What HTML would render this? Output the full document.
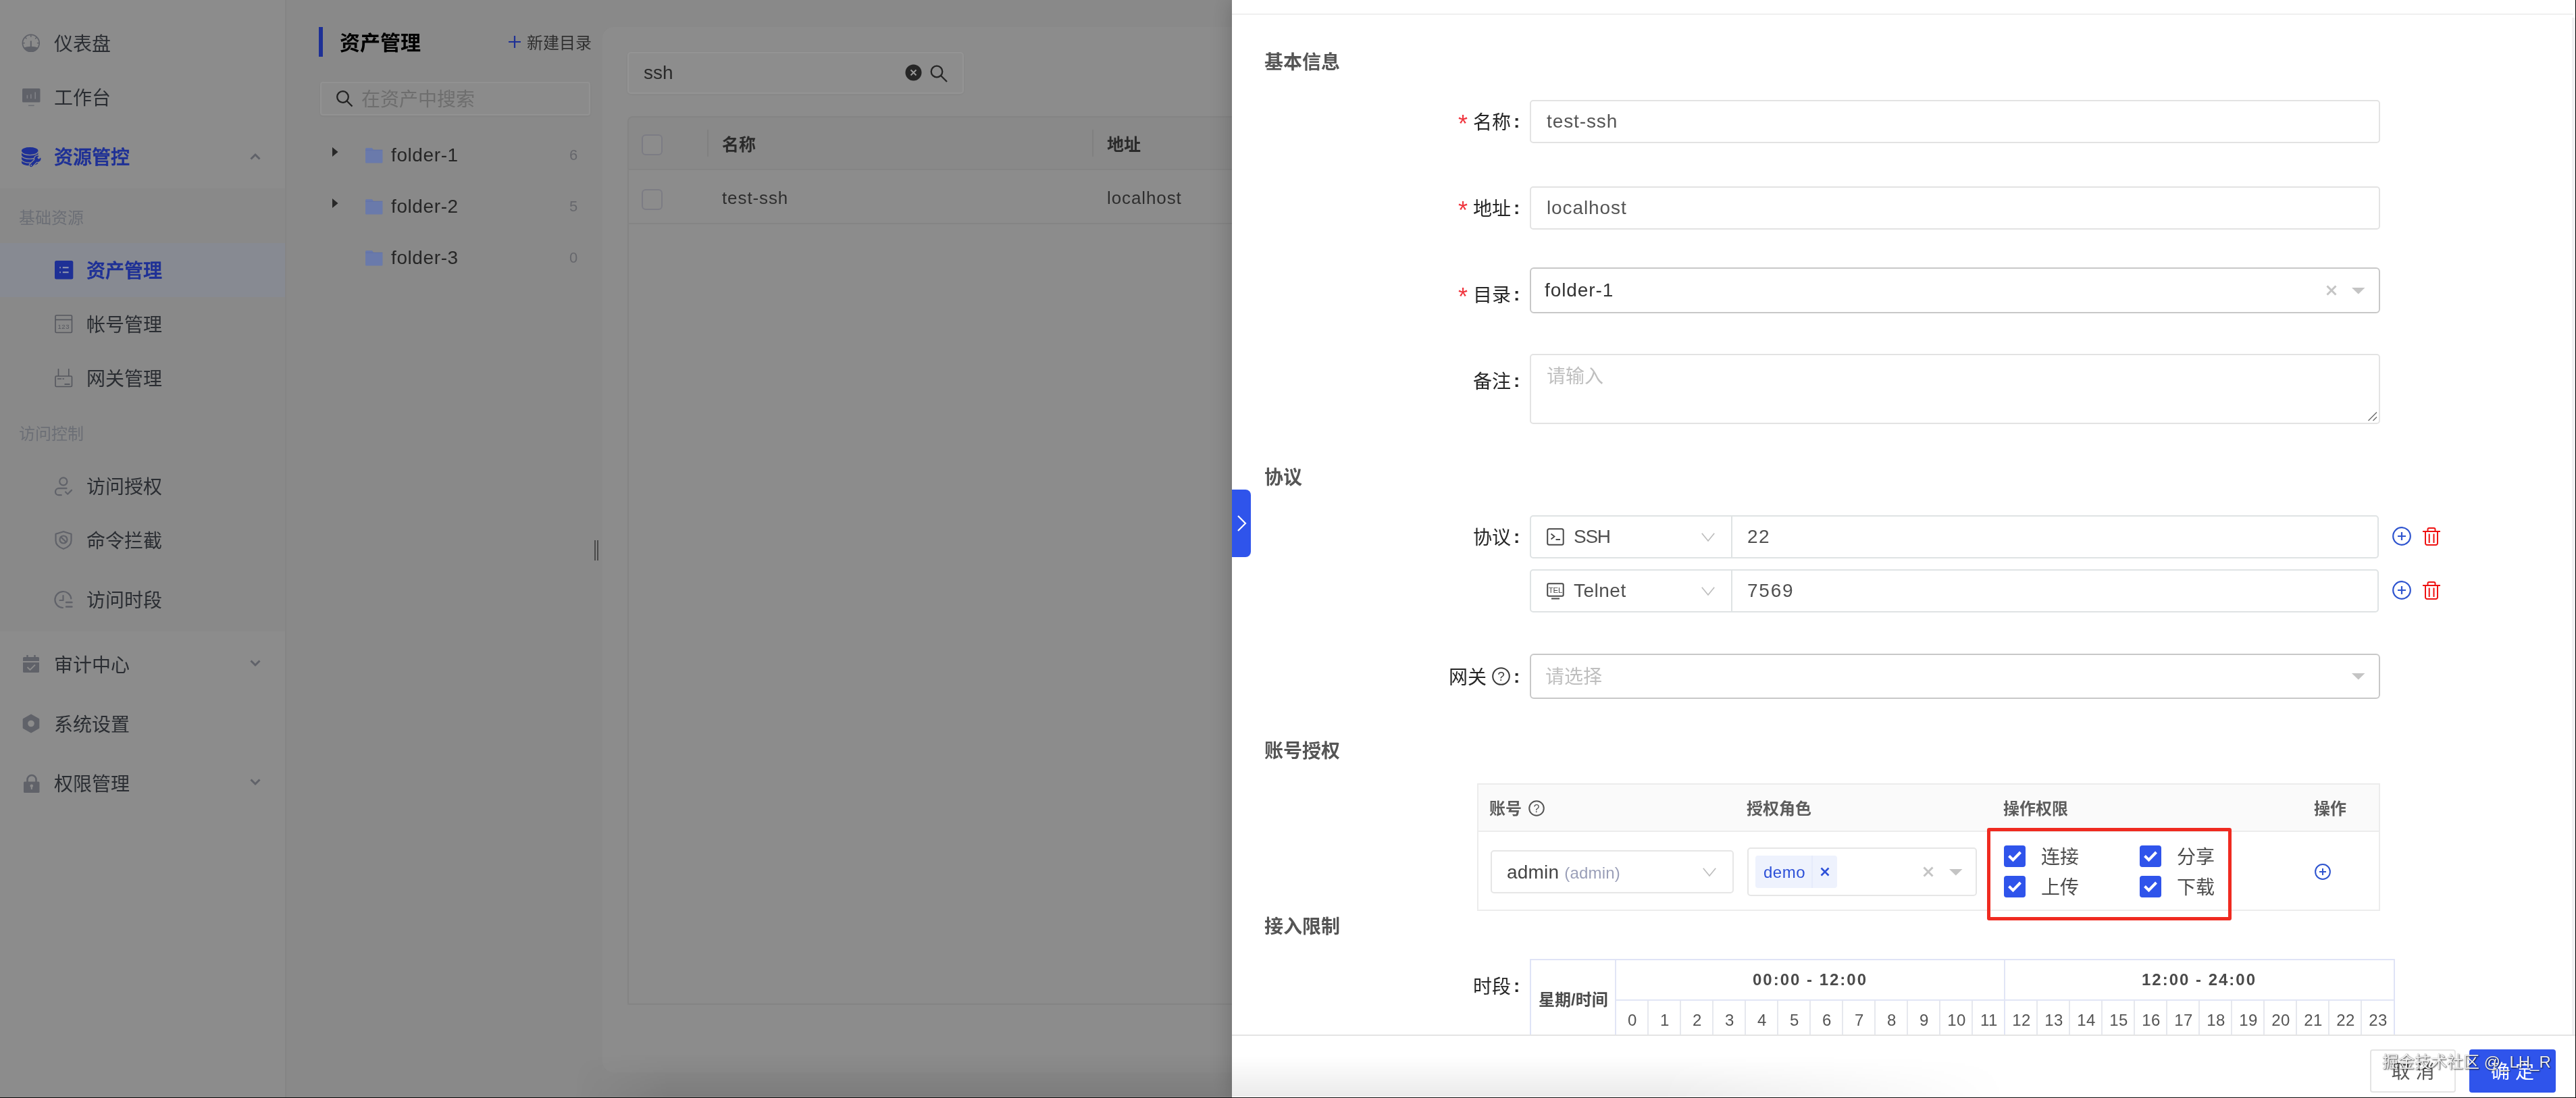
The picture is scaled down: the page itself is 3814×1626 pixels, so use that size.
<!DOCTYPE html>
<html lang="zh-CN">
<head>
<meta charset="utf-8">
<title>资产管理</title>
<style>
*{box-sizing:border-box;margin:0;padding:0}
html,body{width:3814px;height:1626px;overflow:hidden}
body{position:relative;background:#898989;font-family:"Liberation Sans","Noto Sans CJK SC",sans-serif;font-size:28px;color:#333}
.abs{position:absolute}
.t{position:absolute;white-space:nowrap;line-height:40px;height:40px}
svg{position:absolute;display:block;overflow:visible}
/* ---------- left (masked) ---------- */
#side{position:absolute;left:0;top:0;width:424px;height:1626px;background:#8c8c8c;border-right:2px solid #858585}
#sub{position:absolute;left:0;top:279px;width:422px;height:656px;background:#898989}
#sel{position:absolute;left:0;top:360px;width:422px;height:80px;background:#878a92}
.m{color:#2a2d32;font-size:28px}
.g{color:#6c6f76;font-size:24px}
.b{color:#1e3096;font-weight:500;-webkit-text-stroke:.6px #1e3096}
#tree{position:absolute;left:424px;top:0;width:468px;height:1626px;background:#898989}
#card{position:absolute;left:892px;top:40px;width:1000px;height:1548px;background:#8c8c8c;border-radius:16px 0 0 16px}
.la{font-size:28px;letter-spacing:.6px;color:#262626}
.ct{font-size:22px;color:#66676c}
.lt{font-size:26px;letter-spacing:.9px;color:#2e2e2e}
.cb{width:31px;height:31px;border:2.500px solid #7c7c84;border-radius:6px;background:#8c8c8c}
/* ---------- drawer ---------- */
#drawer{position:absolute;left:1824px;top:0;width:1990px;height:1626px;background:#fff;box-shadow:0 0 30px 0 rgba(0,0,0,.22)}

.lb{color:#262626;font-size:28px}
.cl{font-weight:bold;font-family:"Liberation Sans",sans-serif}
.ast{position:absolute;color:#f0353e;font-size:36px;line-height:40px;height:40px;font-family:"Liberation Sans",sans-serif}
.sec{color:#555;font-size:28px;font-weight:bold}
.inp{position:absolute;border:2px solid #e3e3e3;border-radius:5px;background:#fff}
.sl{position:absolute;border:2px solid #c8c8c8;border-radius:6px;background:#fff}
.v{color:#555;font-size:28px;letter-spacing:.9px}
.ph{color:#bfbfbf;font-size:28px}
.th{color:#5c5c5c;font-size:24px;font-weight:bold}
.ck{position:absolute;width:32px;height:32px;border-radius:4px;background:#2f54eb}
.ck svg{left:6px;top:8px}
.tc{position:absolute;top:1482px;width:50px;height:52px;border-left:2px solid #e6e8ee;color:#555;font-size:24px;line-height:58px;text-align:center;letter-spacing:.5px}
</style>
</head>
<body>
<div id="root" style="position:absolute;left:0;top:0;width:3814px;height:1626px;will-change:transform;opacity:.9999">
<!-- LEFT -->
<div id="side">
  <div id="sub"></div>
  <div id="sel"></div>

  <!-- main items -->
  <svg style="left:32px;top:50px" width="28" height="28" viewBox="0 0 28 28"><circle cx="13.800" cy="13.800" r="12.400" fill="none" stroke="#606269" stroke-width="1.700"/><path d="M2.550 20.800Q13.800 16.600 25.050 20.800A13.250 13.250 0 0 1 2.550 20.800Z" fill="#606269"/><path d="M13.800 10.500v9" stroke="#606269" stroke-width="2" fill="none"/><path d="M13.800 1.500v3.400M1.500 13.800h3.200M26.100 13.800h-3.200M5.100 5.100l2.300 2.300M22.500 5.100l-2.300 2.300" stroke="#606269" stroke-width="1.400" fill="none"/></svg>
  <div class="t m" style="left:80px;top:46px">仪表盘</div>
  <svg style="left:33px;top:131px" width="27" height="27" viewBox="0 0 27 27"><rect x="0" y="0" width="26.5" height="20.5" rx="1.5" fill="#606269"/><path d="M7.400 14.800v-5M12.800 15v-6.500M19.200 15.600v-10" stroke="#808187" stroke-width="1.600" fill="none"/><path d="M9 25.300h8.600" stroke="#6c6e74" stroke-width="1.600" fill="none"/></svg>
  <div class="t m" style="left:80px;top:126px">工作台</div>
  <svg style="left:31.700px;top:217.600px" width="29" height="29" viewBox="0 0 29 29"><path d="M0 5V22.500A12.200 5 0 0 0 24.400 22.500V5A12.200 5 0 0 0 0 5Z" fill="#1e3096"/><path d="M0 6.600A12.200 5 0 0 0 24.400 6.600M0 12.400A12.200 5 0 0 0 24.400 12.400M0 18.200A12.200 5 0 0 0 24.400 18.200" fill="none" stroke="#8c8c8c" stroke-width="1.300"/><g transform="translate(23.800 17.200) rotate(45)"><circle r="4.700" fill="#1e3096" stroke="#8c8c8c" stroke-width="2.400"/><rect x="-2.200" y="2.500" width="4.400" height="13.500" rx="2.200" fill="#1e3096" stroke="#8c8c8c" stroke-width="2.400"/><circle r="4.700" fill="#1e3096"/><rect x="-2.200" y="2.500" width="4.400" height="13.500" rx="2.200" fill="#1e3096"/><rect x="-1.700" y="-6" width="3.400" height="5.200" fill="#8c8c8c"/><circle cy="13.600" r="1" fill="#8c8c8c"/></g></svg>
  <div class="t m b" style="left:80px;top:214px">资源管控</div>
  <svg style="left:370px;top:227px" width="16" height="10" viewBox="0 0 16 10"><path d="M1.500 8.500L8 2l6.500 6.500" stroke="#606269" stroke-width="3" fill="none"/></svg>

  <div class="t g" style="left:28px;top:303px">基础资源</div>
  <svg style="left:81px;top:386px" width="28" height="28" viewBox="0 0 28 28"><rect x="0" y="0" width="27.300" height="27.500" rx="2.500" fill="#1e3096"/><path d="M11.800 10.300h8.800M11.800 17.200h8.800" stroke="#959ab0" stroke-width="1.900" fill="none"/><path d="M7.200 10.300h1.700M7.200 17.200h1.700" stroke="#959ab0" stroke-width="1.900" fill="none"/></svg>
  <div class="t m b" style="left:128px;top:382px">资产管理</div>
  <svg style="left:81px;top:466px" width="27" height="28" viewBox="0 0 27 28"><rect x="1" y="1" width="24.500" height="25.500" rx="1.500" fill="none" stroke="#55575e" stroke-width="1.600"/><path d="M1 7.500h24.500" stroke="#55575e" stroke-width="1.600"/><text x="13.300" y="21" font-size="9.500" font-family="Liberation Sans,sans-serif" fill="#55575e" text-anchor="middle" letter-spacing=".6">123</text></svg>
  <div class="t m" style="left:128px;top:462px">帐号管理</div>
  <svg style="left:81px;top:546px" width="27" height="28" viewBox="0 0 27 28"><rect x="1" y="11" width="24.500" height="15.500" rx="1.500" fill="none" stroke="#55575e" stroke-width="1.600"/><path d="M5.500 0v11M20.800 0v11" stroke="#55575e" stroke-width="1.600"/><path d="M4 15h6M11.500 15h2.500" stroke="#55575e" stroke-width="1.600"/><path d="M14.500 23h8" stroke="#55575e" stroke-width="1.800"/></svg>
  <div class="t m" style="left:128px;top:542px">网关管理</div>

  <div class="t g" style="left:28px;top:623px">访问控制</div>
  <svg style="left:80px;top:706px" width="28" height="28" viewBox="0 0 28 28"><circle cx="13.800" cy="7" r="5.600" fill="none" stroke="#606269" stroke-width="2.200"/><path d="M18.500 17.200H7a5 5 0 0 0 0 10h3.800" fill="none" stroke="#606269" stroke-width="2.200" stroke-linecap="round"/><path d="M17 22.500l3.200 3.200 5.800-5.800" fill="none" stroke="#606269" stroke-width="2.200" stroke-linecap="round" stroke-linejoin="round"/></svg>
  <div class="t m" style="left:128px;top:702px">访问授权</div>
  <svg style="left:81px;top:786px" width="26" height="28" viewBox="0 0 26 28"><path d="M13 1.200L24.500 4.800v9.700c0 6-4.500 10-11.500 12.300C6 24.500 1.500 20.500 1.500 14.500V4.800z" fill="none" stroke="#606269" stroke-width="2.200" stroke-linejoin="round"/><circle cx="13" cy="13" r="5.500" fill="none" stroke="#606269" stroke-width="2.200"/><path d="M9.200 9.200l7.600 7.600" stroke="#606269" stroke-width="2.200"/></svg>
  <div class="t m" style="left:128px;top:782px">命令拦截</div>
  <svg style="left:80px;top:875px" width="28" height="27" viewBox="0 0 28 27"><path d="M25.300 11.500A12 12 0 1 0 13 25" fill="none" stroke="#606269" stroke-width="2.200" stroke-linecap="round"/><path d="M13.500 7v7H8.500" fill="none" stroke="#606269" stroke-width="2.200" stroke-linecap="round" stroke-linejoin="round"/><path d="M18 17h8.500M18 23.500h8.500" stroke="#606269" stroke-width="2.400" stroke-linecap="round"/></svg>
  <div class="t m" style="left:128px;top:870px">访问时段</div>

  <svg style="left:34px;top:970px" width="24" height="27" viewBox="0 0 24 27"><path d="M0 4.500a1.500 1.500 0 0 1 1.500-1.500H22.500a1.500 1.500 0 0 1 1.500 1.500V9H0zM0 11h24v13.500a1.500 1.500 0 0 1-1.500 1.500H1.500A1.500 1.500 0 0 1 0 24.500z" fill="#606269"/><path d="M6.500 0v5M17.500 0v5" stroke="#606269" stroke-width="2.400"/><path d="M6.500 18l4 4 7.500-7.500" stroke="#8c8c8c" stroke-width="1.800" fill="none"/></svg>
  <div class="t m" style="left:80px;top:966px">审计中心</div>
  <svg style="left:370px;top:977px" width="16" height="10" viewBox="0 0 16 10"><path d="M1.500 1.500L8 8l6.500-6.500" stroke="#606269" stroke-width="3" fill="none"/></svg>
  <svg style="left:33px;top:1057px" width="26" height="29" viewBox="0 0 26 29"><path d="M13 .5l11.500 6.500a1.500 1.500 0 0 1 .8 1.300v12.400a1.500 1.500 0 0 1-.8 1.300L13 28.500 1.500 22a1.500 1.500 0 0 1-.8-1.300V8.300A1.500 1.500 0 0 1 1.500 7z" fill="#606269"/><circle cx="13" cy="14.500" r="4.800" fill="#8c8c8c"/></svg>
  <div class="t m" style="left:80px;top:1054px">系统设置</div>
  <svg style="left:35px;top:1147px" width="24" height="27" viewBox="0 0 24 27"><path d="M5.500 11V7.500a6.500 6.500 0 0 1 13 0V11" fill="none" stroke="#606269" stroke-width="2.600"/><rect x="0" y="10.500" width="23.500" height="16.500" rx="1.500" fill="#606269"/><circle cx="11.800" cy="16.800" r="2.300" fill="#8c8c8c"/><path d="M11.800 17v5" stroke="#8c8c8c" stroke-width="2"/></svg>
  <div class="t m" style="left:80px;top:1142px">权限管理</div>
  <svg style="left:370px;top:1153px" width="16" height="10" viewBox="0 0 16 10"><path d="M1.500 1.500L8 8l6.500-6.500" stroke="#606269" stroke-width="3" fill="none"/></svg>
</div>
<div id="tree">
  <div class="abs" style="left:48px;top:40px;width:6px;height:44px;background:#1e3096"></div>
  <div class="t" style="left:79px;top:44px;font-size:30px;font-weight:bold;color:#000">资产管理</div>
  <svg style="left:329px;top:53px" width="18" height="18" viewBox="0 0 18 18"><path d="M9 0v18M0 9h18" stroke="#1e3096" stroke-width="2.200"/></svg>
  <div class="t" style="left:356px;top:44px;font-size:24px;color:#303030">新建目录</div>
  <div class="abs" style="left:50px;top:121px;width:400px;height:50px;background:#8b8b8b;border:2px solid #929292;border-radius:4px;box-shadow:0 1px 3px rgba(0,0,0,.06)"></div>
  <svg style="left:73px;top:133px" width="26" height="26" viewBox="0 0 26 26"><circle cx="10.500" cy="10.500" r="8.300" fill="none" stroke="#222" stroke-width="2.300"/><path d="M16.500 16.500L24.500 24.500" stroke="#222" stroke-width="2.300"/></svg>
  <div class="t" style="left:111px;top:128px;font-size:28px;color:#6e6e6e">在资产中搜索</div>

  <svg style="left:68px;top:218px" width="9" height="14" viewBox="0 0 9 14"><path d="M0 0l8.500 7L0 14z" fill="#282828"/></svg>
  <svg style="left:117px;top:219px" width="26" height="23" viewBox="0 0 26 23"><path d="M0 1.500A1.500 1.500 0 0 1 1.500 0H10l2 3h12a1.500 1.500 0 0 1 1.500 1.500V21a1.500 1.500 0 0 1-1.500 1.500H1.500A1.500 1.500 0 0 1 0 21z" fill="#6a7aab"/><path d="M0 3.200h25.500" stroke="#6072a8" stroke-width="1"/></svg>
  <div class="t la" style="left:155px;top:210px">folder-1</div>
  <div class="t ct" style="left:419px;top:210px">6</div>
  <svg style="left:68px;top:294px" width="9" height="14" viewBox="0 0 9 14"><path d="M0 0l8.500 7L0 14z" fill="#282828"/></svg>
  <svg style="left:117px;top:295px" width="26" height="23" viewBox="0 0 26 23"><path d="M0 1.500A1.500 1.500 0 0 1 1.500 0H10l2 3h12a1.500 1.500 0 0 1 1.500 1.500V21a1.500 1.500 0 0 1-1.500 1.500H1.500A1.500 1.500 0 0 1 0 21z" fill="#6a7aab"/><path d="M0 3.200h25.500" stroke="#6072a8" stroke-width="1"/></svg>
  <div class="t la" style="left:155px;top:286px">folder-2</div>
  <div class="t ct" style="left:419px;top:286px">5</div>
  <svg style="left:117px;top:371px" width="26" height="23" viewBox="0 0 26 23"><path d="M0 1.500A1.500 1.500 0 0 1 1.500 0H10l2 3h12a1.500 1.500 0 0 1 1.500 1.500V21a1.500 1.500 0 0 1-1.500 1.500H1.500A1.500 1.500 0 0 1 0 21z" fill="#6a7aab"/><path d="M0 3.200h25.500" stroke="#6072a8" stroke-width="1"/></svg>
  <div class="t la" style="left:155px;top:362px">folder-3</div>
  <div class="t ct" style="left:419px;top:362px">0</div>
  <div class="abs" style="left:456px;top:800px;width:2px;height:30px;background:#4a4a4a"></div>
  <div class="abs" style="left:460px;top:800px;width:2px;height:30px;background:#4a4a4a"></div>
</div>
<div id="card">
  <div class="abs" style="left:37px;top:37px;width:498px;height:62px;background:#8d8d8d;border:2px solid #949494;border-radius:5px;box-shadow:0 1px 3px rgba(0,0,0,.06)"></div>
  <div class="t" style="left:61px;top:48px;font-size:28px;color:#2a2a2a">ssh</div>
  <svg style="left:448px;top:55px" width="25" height="25" viewBox="0 0 25 25"><circle cx="12.500" cy="12.500" r="12" fill="#262626"/><path d="M8.500 8.500l8 8M16.500 8.500l-8 8" stroke="#9a9a9a" stroke-width="2"/></svg>
  <svg style="left:485px;top:56px" width="26" height="26" viewBox="0 0 26 26"><circle cx="10" cy="10" r="8.300" fill="none" stroke="#262626" stroke-width="2.300"/><path d="M16 16L25 25" stroke="#262626" stroke-width="2.300"/></svg>
  <div class="abs" style="left:37px;top:132px;width:1000px;height:1316px;border:2px solid #848484;border-right:0;border-radius:8px 0 0 0"></div>
  <div class="abs" style="left:39px;top:134px;width:1000px;height:76px;background:#898989;border-radius:6px 0 0 0"></div>
  <div class="abs" style="left:39px;top:210px;width:1000px;height:2px;background:#848484"></div>
  <div class="abs" style="left:39px;top:290px;width:1000px;height:2px;background:#848484"></div>
  <div class="abs cb" style="left:58px;top:159px"></div>
  <div class="abs cb" style="left:58px;top:240px"></div>
  <div class="abs" style="left:155px;top:152px;width:2px;height:40px;background:#808080"></div>
  <div class="t" style="left:177px;top:154px;font-size:25px;font-weight:bold;color:#2a2a2a">名称</div>
  <div class="t lt" style="left:177px;top:233px">test-ssh</div>
  <div class="abs" style="left:725px;top:152px;width:2px;height:40px;background:#808080"></div>
  <div class="t" style="left:747px;top:154px;font-size:25px;font-weight:bold;color:#2a2a2a">地址</div>
  <div class="t lt" style="left:747px;top:233px">localhost</div>
</div>
<div class="abs" style="left:850px;top:1562px;width:974px;height:62px;background:linear-gradient(rgba(0,0,0,0),rgba(0,0,0,.09));-webkit-mask-image:linear-gradient(to right,transparent,#000 140px);mask-image:linear-gradient(to right,transparent,#000 140px)"></div>
<!-- DRAWER -->
<div id="drawer">
<div class="abs" style="left:0;top:20px;width:1986px;height:2px;background:#efefef"></div>
<div class="t sec" style="left:48px;top:73px">基本信息</div>
<div class="ast" style="left:335px;top:164px">*</div><div class="t lb" style="left:357px;top:162px">名称</div><div class="t lb cl" style="left:417px;top:160px">:</div>
<div class="inp" style="left:441px;top:148px;width:1259px;height:64px"></div><div class="t v" style="left:466px;top:160px">test-ssh</div>
<div class="ast" style="left:335px;top:292px">*</div><div class="t lb" style="left:357px;top:290px">地址</div><div class="t lb cl" style="left:417px;top:288px">:</div>
<div class="inp" style="left:441px;top:276px;width:1259px;height:64px"></div><div class="t v" style="left:466px;top:288px">localhost</div>
<div class="ast" style="left:335px;top:420px">*</div><div class="t lb" style="left:357px;top:418px">目录</div><div class="t lb cl" style="left:417px;top:416px">:</div>
<div class="sl" style="left:441px;top:396px;width:1259px;height:68px"></div><div class="t v" style="left:463px;top:410px;color:#333">folder-1</div>
<svg style="left:1620px;top:422px" width="16" height="16" viewBox="0 0 16 16"><path d="M1.500 1.500l13 13M14.500 1.500l-13 13" stroke="#c4c4c4" stroke-width="3"/></svg><svg style="left:1658px;top:426px" width="20" height="10" viewBox="0 0 20 10"><path d="M0 0h19.500L9.800 9.500z" fill="#c4c4c4"/></svg>
<div class="t lb" style="left:357px;top:546px">备注</div><div class="t lb cl" style="left:417px;top:544px">:</div>
<div class="inp" style="left:441px;top:524px;width:1259px;height:104px"></div><div class="t ph" style="left:466px;top:538px">请输入</div>
<svg style="left:1682px;top:610px" width="14" height="14" viewBox="0 0 14 14"><path d="M13 .5L.5 13M13 7.500L7.500 13" stroke="#6a6a6a" stroke-width="1.400"/></svg>
<div class="t sec" style="left:48px;top:688px">协议</div>
<div class="t lb" style="left:357px;top:777px">协议</div><div class="t lb cl" style="left:417px;top:775px">:</div>
<div class="inp" style="left:441px;top:763px;width:1257px;height:64px;border-color:#dfe3e4"></div><div class="abs" style="left:739px;top:765px;width:2px;height:60px;background:#dfe3e4"></div>
<svg style="left:466px;top:782px" width="26" height="26" viewBox="0 0 26 26"><rect x="1.200" y="1.200" width="23.500" height="23.500" rx="2.500" fill="none" stroke="#484848" stroke-width="2"/><path d="M6.500 8.500l5 4-5 4M13.500 17h6.500" fill="none" stroke="#484848" stroke-width="1.800"/></svg>
<div class="t v" style="left:506px;top:775px;letter-spacing:-1.300px;color:#505050">SSH</div>
<svg style="left:695px;top:789px" width="20" height="13" viewBox="0 0 20 13"><path d="M.8 .8L10 12l9.200-11.200" fill="none" stroke="#bdbdbd" stroke-width="1.700"/></svg>
<div class="t v" style="left:763px;top:775px;letter-spacing:1.5px;color:#505050">22</div>
<svg style="left:1718px;top:780px" width="28" height="28" viewBox="0 0 28 28"><circle cx="14" cy="14" r="12.800" fill="none" stroke="#2e54cf" stroke-width="2.200"/><path d="M14 8v12M8 14h12" stroke="#2e54cf" stroke-width="2.200"/></svg><svg style="left:1763px;top:781px" width="26" height="27" viewBox="0 0 26 27"><path d="M0 6h26M7.500 6V3a2 2 0 0 1 2-2h7a2 2 0 0 1 2 2v3M4 6.500v17a2.500 2.500 0 0 0 2.500 2.500h13a2.500 2.500 0 0 0 2.500-2.500v-17M9.700 9.500v13.500M16.500 9.500v13.500" fill="none" stroke="#ee1111" stroke-width="2"/></svg>
<div class="inp" style="left:441px;top:843px;width:1257px;height:64px;border-color:#dfe3e4"></div><div class="abs" style="left:739px;top:845px;width:2px;height:60px;background:#dfe3e4"></div>
<svg style="left:466px;top:863px" width="26" height="26" viewBox="0 0 26 26"><rect x="1.200" y="1.200" width="23.500" height="18.500" rx="2" fill="none" stroke="#484848" stroke-width="2"/><path d="M7 23.500h12" stroke="#484848" stroke-width="2"/><text x="13" y="14.500" font-size="11.500" text-anchor="middle" fill="#484848" font-family="Liberation Sans,sans-serif" letter-spacing="-.2">TEL</text></svg>
<div class="t v" style="left:506px;top:855px;letter-spacing:.5px;color:#505050">Telnet</div>
<svg style="left:695px;top:869px" width="20" height="13" viewBox="0 0 20 13"><path d="M.8 .8L10 12l9.200-11.200" fill="none" stroke="#bdbdbd" stroke-width="1.700"/></svg>
<div class="t v" style="left:763px;top:855px;letter-spacing:1.8px;color:#505050">7569</div>
<svg style="left:1718px;top:860px" width="28" height="28" viewBox="0 0 28 28"><circle cx="14" cy="14" r="12.800" fill="none" stroke="#2e54cf" stroke-width="2.200"/><path d="M14 8v12M8 14h12" stroke="#2e54cf" stroke-width="2.200"/></svg><svg style="left:1763px;top:861px" width="26" height="27" viewBox="0 0 26 27"><path d="M0 6h26M7.500 6V3a2 2 0 0 1 2-2h7a2 2 0 0 1 2 2v3M4 6.500v17a2.500 2.500 0 0 0 2.500 2.500h13a2.500 2.500 0 0 0 2.500-2.500v-17M9.700 9.500v13.500M16.500 9.500v13.500" fill="none" stroke="#ee1111" stroke-width="2"/></svg>
<div class="t lb" style="left:321px;top:984px">网关</div><svg style="left:385px;top:988px" width="27" height="27" viewBox="0 0 27 27"><circle cx="13.500" cy="13.500" r="12.300" fill="none" stroke="#3a3a3a" stroke-width="2"/><text x="13.500" y="20" font-size="19" text-anchor="middle" fill="#3a3a3a" font-family="Liberation Sans,sans-serif">?</text></svg><div class="t lb cl" style="left:417px;top:982px">:</div>
<div class="sl" style="left:441px;top:968px;width:1259px;height:67px"></div><div class="t ph" style="left:464px;top:983px">请选择</div><svg style="left:1658px;top:997px" width="20" height="10" viewBox="0 0 20 10"><path d="M0 0h19.500L9.800 9.500z" fill="#c4c4c4"/></svg>
<div class="t sec" style="left:48px;top:1093px">账号授权</div>
<div class="abs" style="left:363px;top:1160px;width:1337px;height:189px;border:2px solid #ececec"></div>
<div class="abs" style="left:365px;top:1162px;width:1333px;height:68px;background:#fafafa"></div><div class="abs" style="left:365px;top:1230px;width:1333px;height:2px;background:#ececec"></div>
<div class="t th" style="left:381px;top:1178px">账号</div><svg style="left:439px;top:1185px" width="24" height="24" viewBox="0 0 24 24"><circle cx="12" cy="12" r="10.800" fill="none" stroke="#555" stroke-width="2"/><text x="12" y="17.700" font-size="16" text-anchor="middle" fill="#555" font-family="Liberation Sans,sans-serif">?</text></svg>
<div class="t th" style="left:762px;top:1178px">授权角色</div><div class="t th" style="left:1142px;top:1178px">操作权限</div><div class="t th" style="left:1602px;top:1178px">操作</div>
<div class="inp" style="left:383px;top:1259px;width:360px;height:64px;border-color:#e6e6e6"></div><div class="t v" style="left:407px;top:1272px;color:#444;font-size:28px;letter-spacing:.2px">admin <span style="font-size:24px;color:#9a9fb8;letter-spacing:.2px">(admin)</span></div><svg style="left:697px;top:1285px" width="20" height="13" viewBox="0 0 20 13"><path d="M.8 .8L10 12l9.200-11.200" fill="none" stroke="#bdbdbd" stroke-width="1.700"/></svg>
<div class="inp" style="left:763px;top:1255px;width:340px;height:72px;border-color:#e6e6e6"></div>
<div class="abs" style="left:775px;top:1267px;width:121px;height:48px;background:#eef2fd;border-radius:4px"></div><div class="abs" style="left:858px;top:1267px;width:2px;height:48px;background:#e6ebfb"></div><div class="t" style="left:787px;top:1272px;font-size:24px;letter-spacing:.5px;color:#2d50d8">demo</div>
<svg style="left:871px;top:1284px" width="14" height="14" viewBox="0 0 14 14"><path d="M1.500 1.500l11 11M12.500 1.500l-11 11" stroke="#2d50d8" stroke-width="2.600"/></svg>
<svg style="left:1023px;top:1283px" width="16" height="16" viewBox="0 0 16 16"><path d="M1.500 1.500l13 13M14.500 1.500l-13 13" stroke="#c4c4c4" stroke-width="3"/></svg><svg style="left:1062px;top:1287px" width="20" height="10" viewBox="0 0 20 10"><path d="M0 0h19.500L9.800 9.500z" fill="#c4c4c4"/></svg>
<div class="abs" style="left:1118px;top:1226px;width:362px;height:137px;border:5px solid #ef2a20;border-radius:3px"></div>
<div class="ck" style="left:1143px;top:1252px"><svg width="20" height="16" viewBox="0 0 20 16"><path d="M1.500 7.500l6 6L18.500 2" fill="none" stroke="#fff" stroke-width="4"/></svg></div><div class="t" style="left:1198px;top:1250px;color:#4d4d4d">连接</div>
<div class="ck" style="left:1344px;top:1252px"><svg width="20" height="16" viewBox="0 0 20 16"><path d="M1.500 7.500l6 6L18.500 2" fill="none" stroke="#fff" stroke-width="4"/></svg></div><div class="t" style="left:1399px;top:1250px;color:#4d4d4d">分享</div>
<div class="ck" style="left:1143px;top:1297px"><svg width="20" height="16" viewBox="0 0 20 16"><path d="M1.500 7.500l6 6L18.500 2" fill="none" stroke="#fff" stroke-width="4"/></svg></div><div class="t" style="left:1198px;top:1295px;color:#4d4d4d">上传</div>
<div class="ck" style="left:1344px;top:1297px"><svg width="20" height="16" viewBox="0 0 20 16"><path d="M1.500 7.500l6 6L18.500 2" fill="none" stroke="#fff" stroke-width="4"/></svg></div><div class="t" style="left:1399px;top:1295px;color:#4d4d4d">下载</div>
<svg style="left:1603px;top:1279px" width="24" height="24" viewBox="0 0 24 24"><circle cx="12" cy="12" r="10.900" fill="none" stroke="#2e54cf" stroke-width="2"/><path d="M12 7v10M7 12h10" stroke="#2e54cf" stroke-width="2"/></svg>
<div class="t sec" style="left:48px;top:1353px">接入限制</div>
<div class="t lb" style="left:357px;top:1442px">时段</div><div class="t lb cl" style="left:417px;top:1440px">:</div>
<div class="abs" style="left:441px;top:1420px;width:1281px;height:120px;border:2px solid #dfe3f6;border-bottom:0"></div>
<div class="abs" style="left:567px;top:1422px;width:2px;height:112px;background:#e1e5f5"></div><div class="abs" style="left:1143px;top:1422px;width:2px;height:112px;background:#e1e5f5"></div>
<div class="abs" style="left:569px;top:1480px;width:1151px;height:2px;background:#e1e5f5"></div>
<div class="t th" style="left:454px;top:1461px;color:#4b4b4b">星期/时间</div>
<div class="t th" style="left:569px;top:1431px;width:574px;text-align:center;letter-spacing:2px;color:#4b4b4b">00:00 - 12:00</div><div class="t th" style="left:1145px;top:1431px;width:574px;text-align:center;letter-spacing:2px;color:#4b4b4b">12:00 - 24:00</div>
<div class="tc" style="left:567px;border-left:0;padding-left:2px">0</div>
<div class="tc" style="left:615px">1</div>
<div class="tc" style="left:663px">2</div>
<div class="tc" style="left:711px">3</div>
<div class="tc" style="left:759px">4</div>
<div class="tc" style="left:807px">5</div>
<div class="tc" style="left:855px">6</div>
<div class="tc" style="left:903px">7</div>
<div class="tc" style="left:951px">8</div>
<div class="tc" style="left:999px">9</div>
<div class="tc" style="left:1047px">10</div>
<div class="tc" style="left:1095px">11</div>
<div class="tc" style="left:1143px;border-left:0;padding-left:2px">12</div>
<div class="tc" style="left:1191px">13</div>
<div class="tc" style="left:1239px">14</div>
<div class="tc" style="left:1287px">15</div>
<div class="tc" style="left:1335px">16</div>
<div class="tc" style="left:1383px">17</div>
<div class="tc" style="left:1431px">18</div>
<div class="tc" style="left:1479px">19</div>
<div class="tc" style="left:1527px">20</div>
<div class="tc" style="left:1575px">21</div>
<div class="tc" style="left:1623px">22</div>
<div class="tc" style="left:1671px">23</div>
<div class="abs" style="left:0;top:1532px;width:1990px;height:94px;background:#fff;border-top:2px solid #e4e4e4"></div><div class="abs" style="left:0;top:1564px;width:1150px;height:60px;background:linear-gradient(rgba(0,0,0,0),rgba(0,0,0,.08));-webkit-mask-image:linear-gradient(to right,#000 55%,transparent);mask-image:linear-gradient(to right,#000 55%,transparent)"></div>
<div class="abs" style="left:1685px;top:1554px;width:127px;height:64px;border:2px solid #e4e4e4;border-radius:4px;background:#fff;text-align:center;line-height:64px;font-size:28px;color:#555">取 消</div>
<div class="abs" style="left:1832px;top:1554px;width:128px;height:64px;border-radius:4px;background:#2f54eb;text-align:center;line-height:68px;font-size:28px;color:#fff">确 定</div>
<div class="t" style="left:1703px;top:1553px;font-size:24px;color:rgba(255,255,255,.92);text-shadow:1px 1px 2px rgba(0,0,0,.75),0 0 1px rgba(0,0,0,.5)">掘金技术社区 @_LH_R</div>
<div class="abs" style="left:0;top:725px;width:28px;height:100px;background:#2f54eb;border-radius:0 8px 8px 0"></div><svg style="left:8px;top:763px" width="14" height="24" viewBox="0 0 14 24"><path d="M1 1l11 11L1 23" fill="none" stroke="#fff" stroke-width="2.200"/></svg>
</div>
<div class="abs" style="left:3808px;top:26px;width:4.700px;height:1506px;background:#f1f1f3"></div><div class="abs" style="left:0;top:1624.700px;width:3814px;height:1.300px;background:#0a0a0a"></div><div class="abs" style="left:3812.800px;top:0;width:1.200px;height:1626px;background:#000"></div>
</div>
</body>
</html>
